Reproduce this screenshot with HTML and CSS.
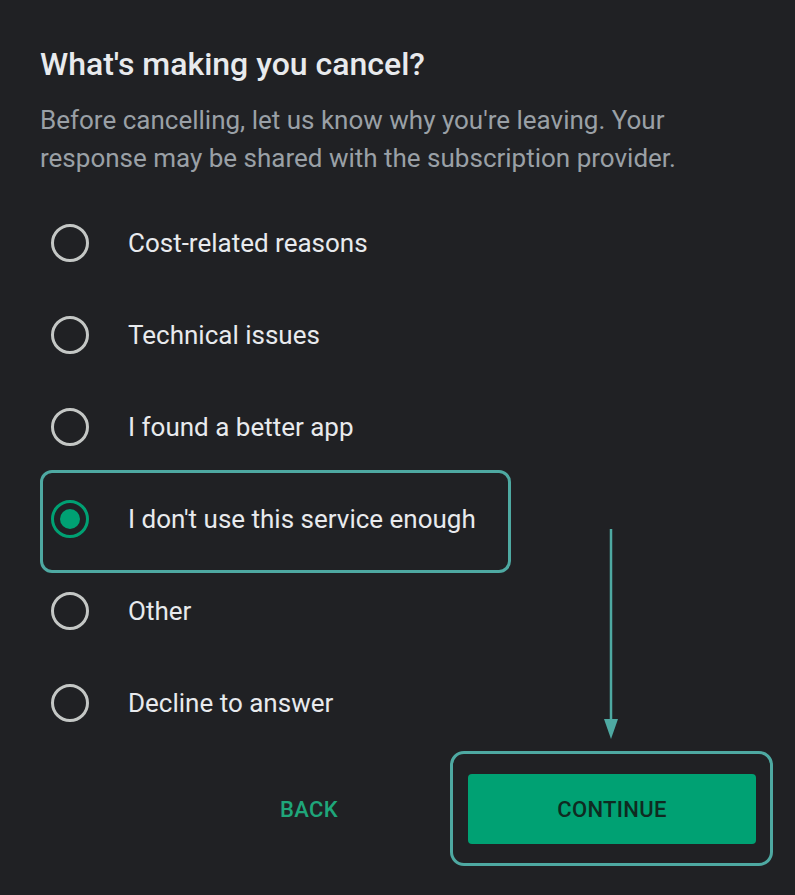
FILE: index.html
```html
<!DOCTYPE html>
<html>
<head>
<meta charset="utf-8">
<link rel="stylesheet" href="styles.css">
</head>
<body>
<div class="sheet">
  <h1 class="title">What's making you cancel?</h1>
  <p class="subtitle">Before cancelling, let us know why you're leaving. Your response may be shared with the subscription provider.</p>
  <ul class="options">
    <li class="option"><span class="radio"></span><span class="label">Cost-related reasons</span></li>
    <li class="option"><span class="radio"></span><span class="label">Technical issues</span></li>
    <li class="option"><span class="radio"></span><span class="label">I found a better app</span></li>
    <li class="option selected"><span class="radio"></span><span class="label">I don't use this service enough</span></li>
    <li class="option"><span class="radio"></span><span class="label">Other</span></li>
    <li class="option"><span class="radio"></span><span class="label">Decline to answer</span></li>
  </ul>
  <div class="actions">
    <button class="btn back">BACK</button>
    <button class="btn continue">CONTINUE</button>
  </div>
  <svg class="arrow" width="20" height="212" viewBox="0 0 20 212">
    <line x1="10" y1="0" x2="10" y2="196" stroke="#4ea9a2" stroke-width="2.5"/>
    <polygon points="3,190 17,190 10,210" fill="#4ea9a2"/>
  </svg>
</div>
</body>
</html>
```
FILE: styles.css
```css
* { box-sizing: border-box; }
html, body {
  margin: 0;
  padding: 0;
  background: #202124;
}
body {
  width: 795px;
  height: 895px;
  overflow: hidden;
  font-family: Roboto, "Noto Sans", sans-serif;
}
.sheet {
  position: relative;
  padding: 44px 39px 0 40px;
}
.title {
  margin: 0;
  font-size: 32px;
  line-height: 40px;
  font-weight: 500;
  color: #e8eaed;
  letter-spacing: 0;
}
.subtitle {
  margin: 17px 0 0;
  font-size: 26px;
  line-height: 38px;
  font-weight: 400;
  color: #9aa0a6;
  width: 680px;
}
.options {
  list-style: none;
  margin: 20px 0 0;
  padding: 0;
}
.option {
  position: relative;
  display: flex;
  align-items: center;
  height: 92px;
  padding-left: 11px;
}
.radio {
  width: 38px;
  height: 38px;
  border-radius: 50%;
  border: 3px solid #c4c7c5;
  flex: none;
  display: flex;
  align-items: center;
  justify-content: center;
}
.label {
  margin-left: 39px;
  font-size: 26px;
  color: #e8eaed;
}
.selected .radio {
  border-color: #00a173;
}
.selected .radio::before {
  content: "";
  width: 20px;
  height: 20px;
  border-radius: 50%;
  background: #00a173;
}
.selected::after {
  content: "";
  position: absolute;
  left: 0;
  top: -3px;
  width: 465px;
  height: 97px;
  border: 3px solid #4ea9a2;
  border-radius: 12px;
}
.actions {
  display: flex;
  justify-content: flex-end;
  align-items: center;
  gap: 100px;
  margin-top: 25px;
}
.btn {
  font-family: Roboto, "Noto Sans", sans-serif;
  font-size: 22px;
  font-weight: 500;
  border: none;
  padding: 0;
  cursor: pointer;
  letter-spacing: 0.3px;
}
.back {
  background: transparent;
  color: #1fa67a;
  width: 118px;
  height: 70px;
}
.continue {
  position: relative;
  width: 288px;
  height: 70px;
  background: #00a173;
  color: #0f2a21;
  border-radius: 4px;
}
.continue::after {
  content: "";
  position: absolute;
  left: -18px;
  top: -23px;
  right: -17px;
  bottom: -22px;
  border: 3px solid #4ea9a2;
  border-radius: 14px;
}
.arrow {
  position: absolute;
  left: 601px;
  top: 529px;
}
```
